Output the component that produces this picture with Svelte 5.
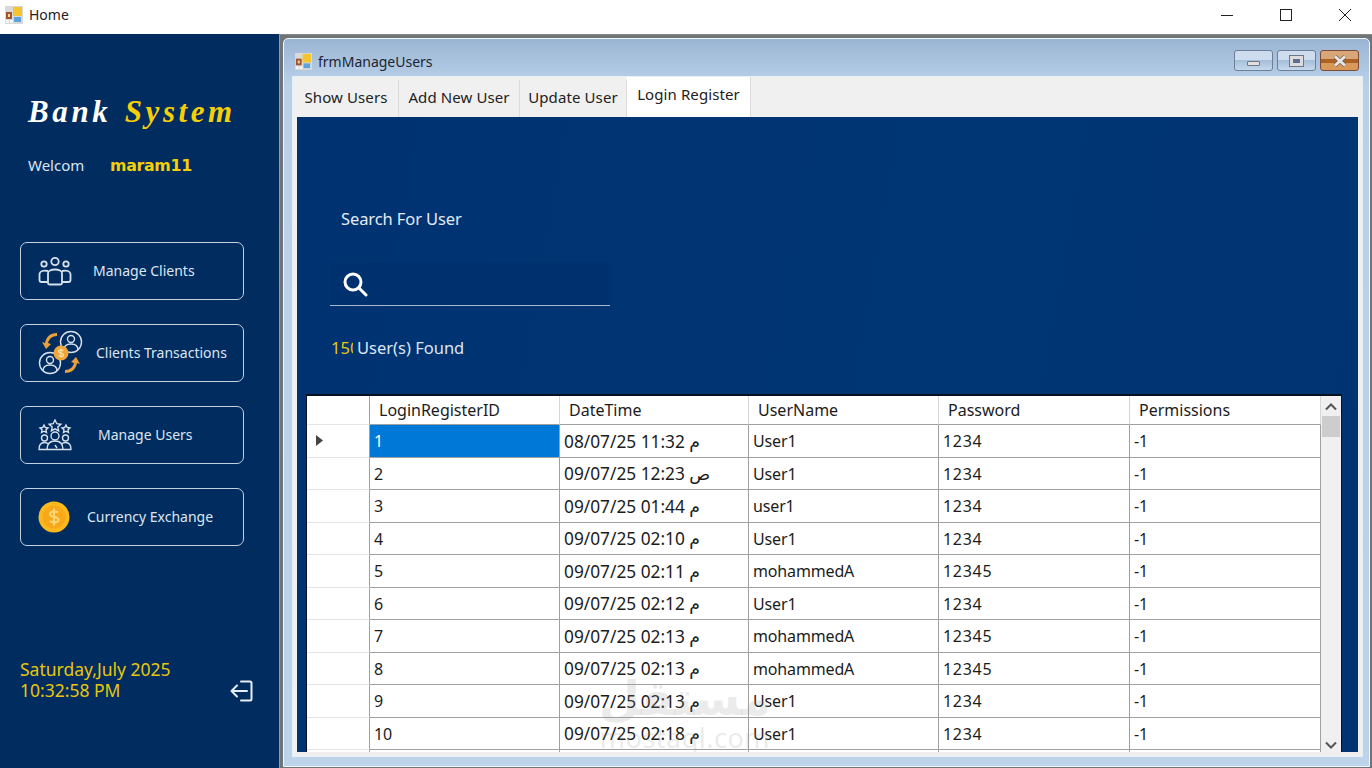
<script>
  const rows = [
    ['1','08/07/25 11:32 م','User1','1234','-1'],
    ['2','09/07/25 12:23 ص','User1','1234','-1'],
    ['3','09/07/25 01:44 م','user1','1234','-1'],
    ['4','09/07/25 02:10 م','User1','1234','-1'],
    ['5','09/07/25 02:11 م','mohammedA','12345','-1'],
    ['6','09/07/25 02:12 م','User1','1234','-1'],
    ['7','09/07/25 02:13 م','mohammedA','12345','-1'],
    ['8','09/07/25 02:13 م','mohammedA','12345','-1'],
    ['9','09/07/25 02:13 م','User1','1234','-1'],
    ['10','09/07/25 02:18 م','User1','1234','-1'],
    ['','','','','']
  ];
  const heads = ['LoginRegisterID','DateTime','UserName','Password','Permissions'];
  const tabs = ['Show Users','Add New User','Update User','Login Register'];
</script>

{#snippet appIcon()}
  <svg class="appicon" viewBox="0 0 18 18" width="18" height="18">
    <rect x="0" y="0" width="18" height="18" fill="#d9d9d9"/>
    <rect x="1" y="6" width="6" height="7" fill="#a5532a"/>
    <rect x="3" y="8" width="2" height="3" fill="#f1d9a8"/>
    <rect x="8" y="1" width="9" height="9" fill="#f5c52f"/>
    <rect x="9" y="11" width="7" height="5" fill="#5ba3dc"/>
    <rect x="1" y="14" width="3" height="3" fill="#f4f4f4"/>
    <rect x="5" y="14" width="3" height="3" fill="#f4f4f4"/>
  </svg>
{/snippet}

<div class="app">
  <header class="titlebar">
    {@render appIcon()}
    <span class="title">Home</span>
    <div class="caption">
      <svg viewBox="0 0 14 14" width="14" height="14"><path d="M1 7.500h12" stroke="#222" fill="none"/></svg>
      <svg viewBox="0 0 14 14" width="14" height="14"><rect x="1.500" y="1.500" width="11" height="11" stroke="#222" fill="none"/></svg>
      <svg viewBox="0 0 14 14" width="14" height="14"><path d="M1 1l12 12M13 1L1 13" stroke="#222" fill="none"/></svg>
    </div>
  </header>

  <div class="body">
    <aside class="side">
      <h1 class="logo"><span class="w">Bank</span> <span class="y">System</span></h1>
      <div class="welcome"><span class="wl">Welcome</span><span class="user">maram11</span></div>

      <nav class="nav">
        <button class="btn b1">
          <svg class="ico" viewBox="0 0 34 30" width="34" height="30" fill="none" stroke="#d7e1ec" stroke-width="1.800">
            <circle cx="6" cy="8" r="2.700"/><circle cx="17" cy="5.500" r="3.700"/><circle cx="28" cy="8" r="2.700"/>
            <path d="M10 15c-5-1-8 0-8.500 3v6c0 1.500 1 2 2 2h6"/>
            <path d="M24 15c5-1 8 0 8.500 3v6c0 1.500-1 2-2 2h-6"/>
            <path d="M10 27v-10c0-2 3-3.500 7-3.500s7 1.500 7 3.500v10c0 1-1 1.500-2 1.500h-10c-1 0-2-.5-2-1.500z"/>
          </svg>
          <span>Manage Clients</span>
        </button>
        <button class="btn b2">
          <svg class="ico" viewBox="0 0 46 46" width="46" height="46" fill="none">
            <g stroke="#d7e1ec" stroke-width="1.400">
              <circle cx="33" cy="12" r="10.500"/>
              <circle cx="12" cy="33" r="10.500"/>
              <circle cx="33" cy="9" r="3.500"/><path d="M26 20c0-5 3-6 7-6s7 1 7 6"/>
              <circle cx="12" cy="30" r="3.500"/><path d="M5 41c0-5 3-6 7-6s7 1 7 6"/>
            </g>
            <path d="M19 3C12 3 8 7 7 13l-3-1 4 7 5-5-3-1c1-4 4-7 9-7z" fill="#e9a23b"/>
            <path d="M27 43c7 0 11-4 12-10l3 1-4-7-5 5 3 1c-1 4-4 7-9 7z" fill="#e9a23b"/>
            <circle cx="23" cy="23" r="7.500" fill="#f0a63a"/>
            <path d="M25.500 20.500c-1-1-5-1-5 1s5 1 5 3.500-4 1.500-5 .5M23 18.500v9" stroke="#fde2b0" stroke-width="1.200" fill="none"/>
          </svg>
          <span>Clients Transactions</span>
        </button>
        <button class="btn b3">
          <svg class="ico" viewBox="0 0 34 32" width="34" height="32" fill="none" stroke="#d7e1ec" stroke-width="1.400">
            <path d="M17 1l1.800 3.700 4 .5-3 2.700.8 4-3.600-2-3.600 2 .8-4-3-2.700 4-.5zM6 6l1.300 2.500 2.700.4-2 1.900.5 2.700-2.500-1.300-2.500 1.300.5-2.700-2-1.900 2.700-.4zM28 6l1.300 2.500 2.700.4-2 1.900.5 2.700-2.500-1.300-2.500 1.300.5-2.700-2-1.900 2.700-.4z"/>
            <circle cx="17" cy="17" r="4"/><circle cx="6.500" cy="19" r="3"/><circle cx="27.500" cy="19" r="3"/>
            <path d="M1 30.500c0-5 2-7 5.500-7 1.500 0 3 .5 3.500 1.500M33 30.500c0-5-2-7-5.500-7-1.500 0-3 .5-3.500 1.500M9 30.500c0-6 3-8.500 8-8.500s8 2.500 8 8.500M0.500 30.500h33M17 26l2 3"/>
          </svg>
          <span>Manage Users</span>
        </button>
        <button class="btn b4">
          <svg class="ico" viewBox="0 0 32 32" width="32" height="32">
            <circle cx="16" cy="16" r="15.500" fill="#fbb91c"/>
            <circle cx="16" cy="16" r="11.500" fill="#f8a91a"/>
            <path d="M20 11.500c-1.500-1.500-8-1.800-8 1.800 0 4 8.500 1.500 8.500 5.500 0 3.500-6.500 3-8.500 1.200M16 7.500v17" stroke="#fcd779" stroke-width="2" fill="none"/>
          </svg>
          <span>Currency Exchange</span>
        </button>
      </nav>

      <footer class="clock">
        <div class="when"><div>Saturday,July 2025</div><div>10:32:58 PM</div></div>
        <svg class="logout" viewBox="0 0 24 24" width="24" height="24" fill="none" stroke="#e8eef5" stroke-width="2" stroke-linecap="round" stroke-linejoin="round">
          <path d="M11 2.500h9c1 0 1.500 .5 1.500 1.500v16c0 1-.5 1.500-1.500 1.500h-9"/>
          <path d="M17 12H2M7 6.500L1.500 12 7 17.500"/>
        </svg>
      </footer>
    </aside>

    <main class="mdi">
      <section class="win">
        <div class="wintitle">
          {@render appIcon()}
          <span class="wintext">frmManageUsers</span>
          <div class="winbtns">
            <span class="wb"><i class="gmin"></i></span>
            <span class="wb"><i class="gmax"></i></span>
            <span class="wb close"><svg viewBox="0 0 16 12" width="16" height="12"><path d="M3 1.500l10 9M13 1.500l-10 9" stroke="#6e5a4c" stroke-width="4.200"/><path d="M3 1.500l10 9M13 1.500l-10 9" stroke="#e6e6e6" stroke-width="3"/></svg></span>
          </div>
        </div>

        <div class="frame">
          <div class="tabs">
            {#each tabs as t, i}
              <div class="tab t{i}" class:active={i === 3}>{t}</div>
            {/each}
          </div>

          <div class="panel">
            <div class="search-label">Search For User</div>
            <div class="search">
              <svg viewBox="0 0 26 26" width="26" height="26" fill="none" stroke="#fff" stroke-width="3" stroke-linecap="round"><circle cx="11" cy="11" r="8"/><path d="M17 17l7 7"/></svg>
            </div>
            <div class="found"><span class="count">150</span><span>User(s) Found</span></div>

            <div class="grid">
              <div class="cells">
                <div class="rh hd"></div>
                {#each heads as h}<div class="hc">{h}</div>{/each}
                {#each rows as r, i}
                  <div class="rh">{#if i === 0}<svg viewBox="0 0 8 11" width="8" height="11"><path d="M0 0l7 5.500L0 11z" fill="#444"/></svg>{/if}</div>
                  {#each r as c, j}
                    <div class="cell" class:sel={i === 0 && j === 0} class:dt={j === 1} class:num={j === 3}>{c}</div>
                  {/each}
                {/each}
              </div>
              <div class="scroll">
                <svg viewBox="0 0 12 8" width="12" height="8"><path d="M1 6.500l5-5 5 5" stroke="#555" stroke-width="2" fill="none"/></svg>
                <div class="thumb"></div>
                <svg class="down" viewBox="0 0 12 8" width="12" height="8"><path d="M1 1.500l5 5 5-5" stroke="#555" stroke-width="2" fill="none"/></svg>
              </div>
              <div class="mark"><div class="mark-ar">مستقل</div><div class="mark-en">mostaql.com</div></div>
            </div>
          </div>
        </div>
      </section>
    </main>
  </div>
</div>

<style>
  :global(body) { margin: 0; }
  .app { width: 1372px; height: 768px; display: flex; flex-direction: column; overflow: hidden; font-family: "Noto Sans", "DejaVu Sans", sans-serif; background: #fff; }
  .titlebar { height: 34px; flex: none; display: flex; align-items: center; padding: 0 0 0 5px; box-sizing: border-box; background: #fff; }
  .appicon { flex: none; }
  .title { margin-left: 6px; font-size: 14px; color: #222; margin-top: -6px; }
  .titlebar .appicon { margin-top: -4px; }
  .caption { margin-left: auto; display: flex; gap: 45px; padding-right: 20px; margin-top: -4px; }

  .body { flex: 1; display: flex; min-height: 0; }
  .side { width: 279px; flex: none; background: #012c60; display: flex; flex-direction: column; padding: 0 35px 0 20px; box-sizing: border-box; }
  .logo { margin: 58px 0 0 8px; font: italic bold 31px/40px "Liberation Serif", serif; letter-spacing: 3.600px; white-space: nowrap; }
  .logo .w { color: #fff; }
  .logo .y { color: #f5cf07; margin-left: 2px; }
  .welcome { margin: 22px 0 0 8px; display: flex; align-items: center; height: 22px; }
  .wl { width: 57px; overflow: hidden; font-size: 15px; color: #dbe5f0; white-space: nowrap; }
  .user { margin-left: 25px; font: bold 15.800px "DejaVu Sans", sans-serif; color: #f5cf07; letter-spacing: -.3px; }
  .nav { margin-top: 66px; display: flex; flex-direction: column; gap: 24px; }
  .btn { width: 224px; height: 58px; box-sizing: border-box; border: 1.500px solid #c5d0de; border-radius: 7px; background: transparent; color: #dce6f1; font: 14px "Noto Sans", sans-serif; display: flex; align-items: center; padding: 0; position: relative; white-space: nowrap; }
  .btn span { margin-top: -2px; }
  .ico { flex: none; margin-left: 17px; }
  .b1 span { margin-left: 21px; }
  .b2 span { margin-left: 12px; }
  .b3 span { margin-left: 26px; }
  .b4 span { margin-left: 17px; }
  .clock { margin-top: auto; margin-bottom: 67px; display: flex; justify-content: space-between; align-items: flex-end; width: 236px; }
  .when { color: #e8c60c; font-size: 17.500px; line-height: 21px; white-space: nowrap; }
  .logout { margin-bottom: -2px; margin-right: 2px; }

  .mdi { flex: 1; min-width: 0; background: #6f7478; padding: 3px 2px 1px 3px; box-sizing: border-box; display: flex; border-top: 1px solid #888; border-left: 1px solid #999; }
  .win { flex: 1; min-width: 0; display: flex; flex-direction: column; background: linear-gradient(#9ab5d4, #b9d0e8 45px, #bdd3ea); border: 1px solid #f2f7fb; border-radius: 5px 5px 0 0; box-sizing: border-box; padding: 0 6px 9px 8px; }
  .wintitle { height: 37px; flex: none; display: flex; align-items: center; padding: 8px 0 0 3px; box-sizing: border-box; }
  .wintitle .appicon { width: 17px; height: 17px; }
  .wintext { margin-left: 6px; font-size: 14px; color: #1c2530; }
  .winbtns { margin-left: auto; display: flex; gap: 4px; padding-right: 4px; margin-top: -2px; }
  .wb { width: 39px; height: 21px; box-sizing: border-box; border: 1px solid #6c7f98; border-radius: 3px; display: flex; align-items: center; justify-content: center; background: linear-gradient(#cddcee 50%, #a7bfd9 50%, #c5d8ec); }
  .wb.close { background: linear-gradient(#d9a678 40%, #ad6225 40%, #ad6225 62%, #d9995a 62%); border-color: #7b4b3a; }
  .gmin { display: block; width: 13px; height: 5px; box-sizing: border-box; background: #e0e0e0; border: 1px solid #6d7684; margin-top: 6px; border-radius: 1px; }
  .gmax { display: block; width: 7px; height: 4px; background: #5f6d8e; border: 3px solid #dcdcdc; outline: 1px solid #6d7684; }

  .frame { flex: 1; min-height: 0; display: flex; flex-direction: column; background: #f0f0f0; border: 1px solid #e6eef6; padding: 0 4px 4px 1px; box-sizing: border-box; }
  .tabs { height: 40px; flex: none; display: flex; align-items: flex-end; gap: 1px; }
  .tab { height: 37px; box-sizing: border-box; display: flex; align-items: center; justify-content: center; font-size: 15px; color: #222; letter-spacing: .1px; background: #f0f0f0; white-space: nowrap; box-shadow: 1px 0 0 #dcdcdc; padding-bottom: 4px; }
  .t0 { width: 104px; }
  .t1 { width: 120px; }
  .t2 { width: 106px; }
  .t3 { width: 123px; height: 40px; background: #fff; padding-bottom: 7px; }
  .panel { flex: 1; min-height: 0; margin-left: 3px; background: linear-gradient(100deg, #003272, #003674 60%, #003371); display: flex; flex-direction: column; box-sizing: border-box; padding: 0 16px 0 9px; }
  .search-label { margin: 91px 0 0 35px; font-size: 16.500px; line-height: 22px; color: #e4ebf3; letter-spacing: -.1px; }
  .search { margin: 32px 0 0 24px; width: 280px; height: 44px; box-sizing: border-box; background: #00316f; border-bottom: 1.500px solid #a9b8cc; padding: 9px 0 0 12px; }
  .found { margin: 29px 0 0 25px; height: 24px; display: flex; align-items: center; font-size: 16.500px; color: #dde6f0; }
  .count { width: 22px; margin-right: 4px; overflow: hidden; color: #e8c60c; letter-spacing: 0; white-space: nowrap; }
  .grid { margin-top: 35px; flex: 1; min-height: 0; position: relative; display: flex; background: #fff; border: solid #06121f; border-width: 2px 1px 0 1px; overflow: hidden; }
  .cells { display: grid; grid-template-columns: 63px 190px 189px 190px 191px 191px; grid-auto-rows: 32.500px; grid-template-rows: 29px; align-content: start; flex: none; font-size: 16px; color: #1c1c1c; }
  .hc, .hd { background: #fff; border-right: 1px solid #d6d6d6; border-bottom: 1px solid #a0a0a0; box-sizing: border-box; display: flex; align-items: center; padding-left: 9px; white-space: nowrap; }
  .hd { border-right-color: #a0a0a0; }
  .rh { box-sizing: border-box; background: #fff; border-right: 1px solid #a0a0a0; border-bottom: 1px solid #e4e4e4; display: flex; align-items: center; padding-left: 9px; }
  .cell { box-sizing: border-box; border-right: 1px solid #a0a0a0; border-bottom: 1px solid #a0a0a0; display: flex; align-items: center; padding: 1px 0 0 4px; white-space: nowrap; letter-spacing: -.15px; }
  .cell.num { letter-spacing: .72px; }
  .cell.dt { font-size: 17.300px; letter-spacing: 0; }
  .cell.sel { background: #0078d7; color: #fff; }
  .scroll { flex: 1; background: #f0f0f0; display: flex; flex-direction: column; align-items: center; position: relative; padding-top: 7px; }
  .thumb { align-self: stretch; height: 21px; margin: 5px 1px 0; background: #cdcdcd; }
  .down { margin-top: auto; margin-bottom: 3px; }
  .mark { position: absolute; left: 288px; top: 278px; width: 180px; text-align: center; color: rgba(150, 150, 150, .2); pointer-events: none; white-space: nowrap; }
  .mark-ar { font: bold 47px/50px "DejaVu Sans", sans-serif; }
  .mark-en { font: 27px/28px "Noto Sans", sans-serif; letter-spacing: .5px; }
</style>
